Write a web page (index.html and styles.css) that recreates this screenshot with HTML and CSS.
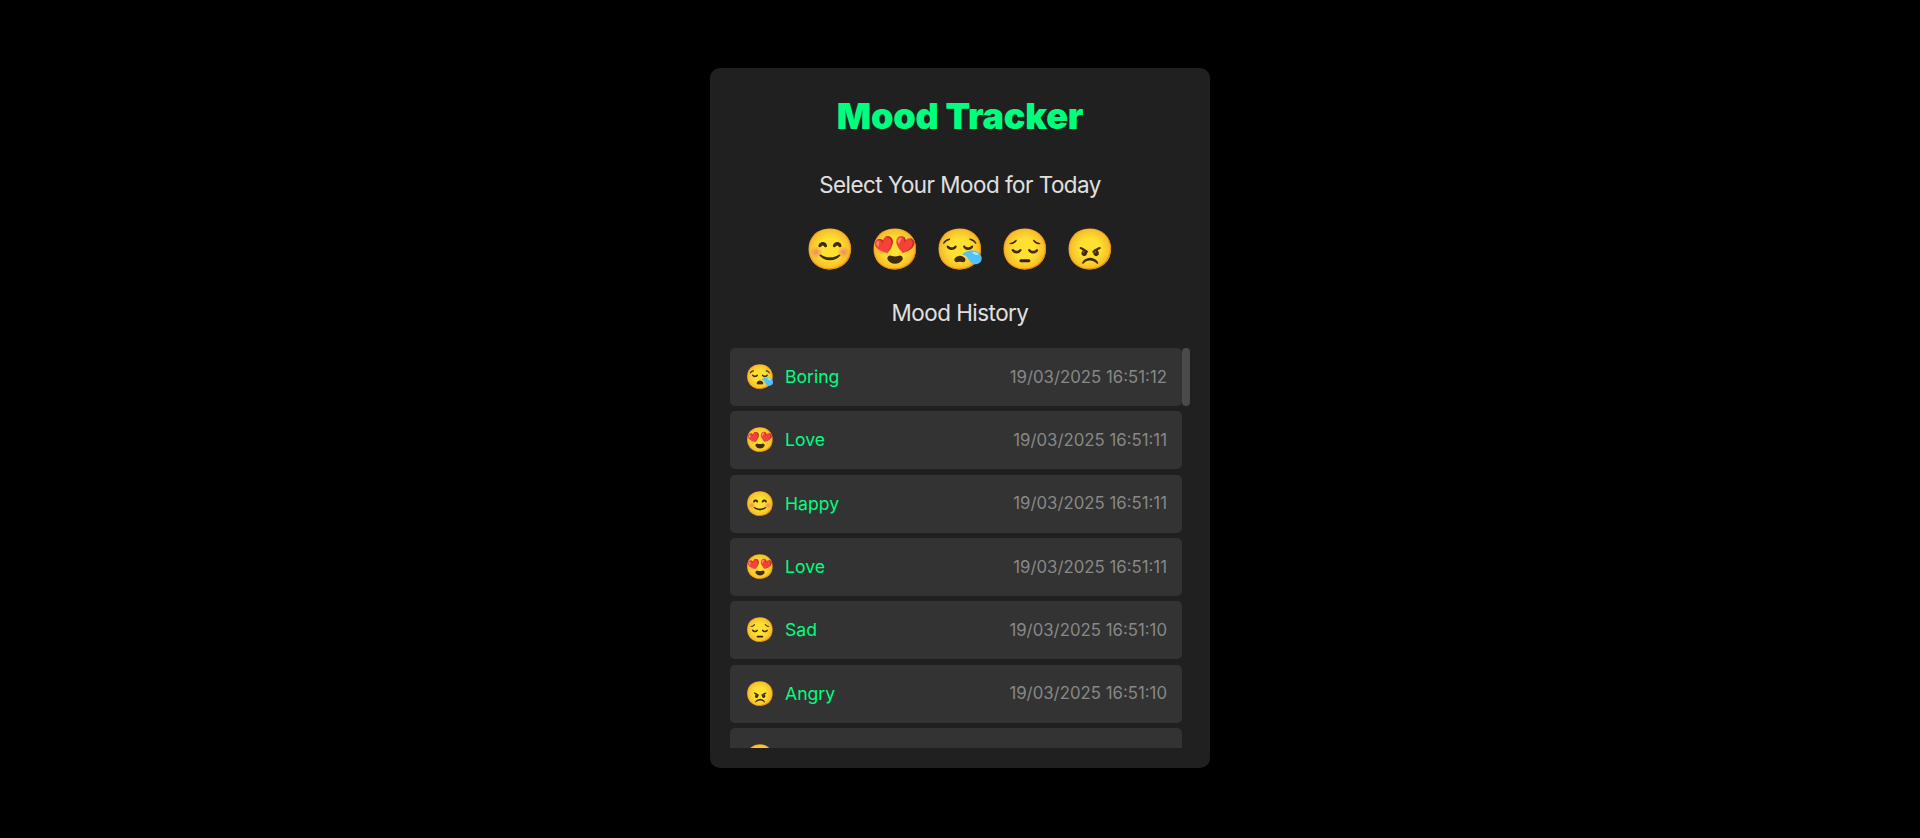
FILE: index.html
```html
<!DOCTYPE html>
<html lang="en">
<head>
  <meta charset="UTF-8">
  <title>Mood Tracker</title>
  <link rel="stylesheet" href="styles.css">
</head>
<body>
  <div class="container">
    <h1>Mood Tracker</h1>
    <h2 class="select-title">Select Your Mood for Today</h2>
    <div class="moods">
      <span class="mood">😊</span>
      <span class="mood">😍</span>
      <span class="mood">😪</span>
      <span class="mood">😔</span>
      <span class="mood">😠</span>
    </div>
    <h2 class="history-title">Mood History</h2>
    <div class="history">
      <div class="history-list">
        <div class="entry">
          <div class="entry-left"><span class="entry-emoji">😪</span><span class="entry-name">Boring</span></div>
          <span class="entry-time">19/03/2025 16:51:12</span>
        </div>
        <div class="entry">
          <div class="entry-left"><span class="entry-emoji">😍</span><span class="entry-name">Love</span></div>
          <span class="entry-time">19/03/2025 16:51:11</span>
        </div>
        <div class="entry">
          <div class="entry-left"><span class="entry-emoji">😊</span><span class="entry-name">Happy</span></div>
          <span class="entry-time">19/03/2025 16:51:11</span>
        </div>
        <div class="entry">
          <div class="entry-left"><span class="entry-emoji">😍</span><span class="entry-name">Love</span></div>
          <span class="entry-time">19/03/2025 16:51:11</span>
        </div>
        <div class="entry">
          <div class="entry-left"><span class="entry-emoji">😔</span><span class="entry-name">Sad</span></div>
          <span class="entry-time">19/03/2025 16:51:10</span>
        </div>
        <div class="entry">
          <div class="entry-left"><span class="entry-emoji">😠</span><span class="entry-name">Angry</span></div>
          <span class="entry-time">19/03/2025 16:51:10</span>
        </div>
        <div class="entry">
          <div class="entry-left"><span class="entry-emoji">😊</span></div>
        </div>
      </div>
      <div class="scrollbar"><div class="scrollbar-thumb"></div></div>
    </div>
  </div>
</body>
</html>
```

FILE: styles.css
```css
* {
  box-sizing: border-box;
}
body {
  margin: 0;
  height: 838px;
  padding-top: 68px;
  background: #000;
  font-family: Inter, sans-serif;
  display: flex;
  align-items: flex-start;
  justify-content: center;
  overflow: hidden;
}
.container {
  width: 500px;
  height: 700px;
  background: #202020;
  border-radius: 10px;
  padding: 26px 20px 20px;
  text-align: center;
}
h1 {
  margin: 0 0 34px;
  font-size: 36px;
  line-height: 44px;
  font-weight: 900;
  letter-spacing: -0.2px;
  color: #00ff7f;
}
h2 {
  margin: 0;
  font-size: 22.4px;
  line-height: 26px;
  font-weight: 400;
  letter-spacing: -0.5px;
  color: #e0e0e0;
}
.moods {
  display: flex;
  justify-content: center;
  gap: 15px;
  height: 48px;
  margin: 27px 0;
}
.mood {
  font-size: 40px;
  line-height: 48px;
}
.history-title {
  margin-bottom: 22px;
}
.history {
  display: flex;
  height: 400px;
  overflow: hidden;
}
.history-list {
  flex: 1;
}
.scrollbar {
  width: 8px;
}
.scrollbar-thumb {
  height: 58px;
  background: #4a4a4a;
  border-radius: 4px;
}
.entry {
  display: flex;
  justify-content: space-between;
  align-items: center;
  height: 58px;
  padding: 0 15px 1px;
  margin-bottom: 5.35px;
  background: #333;
  border-radius: 5px;
}
.entry-left {
  display: flex;
  align-items: center;
  gap: 10px;
}
.entry-emoji {
  font-size: 24px;
}
.entry-name {
  font-size: 17.6px;
  color: #00ff7f;
}
.entry-time {
  font-size: 16.8px;
  color: #888;
}
```
